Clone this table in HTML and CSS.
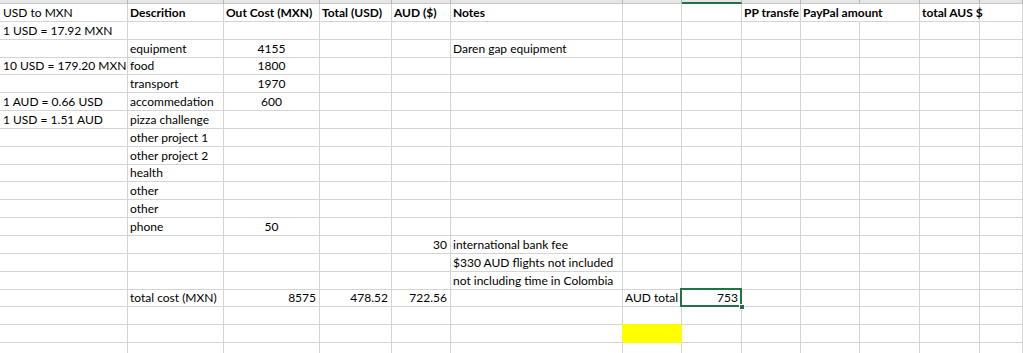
FILE: index.html
```html
<!DOCTYPE html>
<html>
<head>
<meta charset="utf-8">
<link rel="stylesheet" href="styles.css">
</head>
<body>
<div class="colhead">
  <div></div><div></div><div></div><div></div><div></div><div></div><div></div><div class="active"></div><div></div><div></div><div></div><div></div><div></div>
</div>
<div class="sheet">
  <!-- row 0 -->
  <div class="a">USD to MXN</div><div class="b">Descrition</div><div class="b">Out Cost (MXN)</div><div class="b">Total (USD)</div><div class="b">AUD ($)</div><div class="b">Notes</div><div></div><div></div><div class="b">PP transfe</div><div class="b span2">PayPal amount</div><div class="b spill">total AUS $</div><div></div>
  <!-- row 1 -->
  <div class="a">1 USD = 17.92 MXN</div><div></div><div></div><div></div><div></div><div></div><div></div><div></div><div></div><div></div><div></div><div></div><div></div>
  <!-- row 2 -->
  <div class="a"></div><div>equipment</div><div class="ctr">4155</div><div></div><div></div><div>Daren gap equipment</div><div></div><div></div><div></div><div></div><div></div><div></div><div></div>
  <!-- row 3 -->
  <div class="a">10 USD = 179.20 MXN</div><div>food</div><div class="ctr">1800</div><div></div><div></div><div></div><div></div><div></div><div></div><div></div><div></div><div></div><div></div>
  <!-- row 4 -->
  <div class="a"></div><div>transport</div><div class="ctr">1970</div><div></div><div></div><div></div><div></div><div></div><div></div><div></div><div></div><div></div><div></div>
  <!-- row 5 -->
  <div class="a">1 AUD = 0.66 USD</div><div>accommedation</div><div class="ctr">600</div><div></div><div></div><div></div><div></div><div></div><div></div><div></div><div></div><div></div><div></div>
  <!-- row 6 -->
  <div class="a">1 USD = 1.51 AUD</div><div>pizza challenge</div><div></div><div></div><div></div><div></div><div></div><div></div><div></div><div></div><div></div><div></div><div></div>
  <!-- row 7 -->
  <div class="a"></div><div>other project 1</div><div></div><div></div><div></div><div></div><div></div><div></div><div></div><div></div><div></div><div></div><div></div>
  <!-- row 8 -->
  <div class="a"></div><div>other project 2</div><div></div><div></div><div></div><div></div><div></div><div></div><div></div><div></div><div></div><div></div><div></div>
  <!-- row 9 -->
  <div class="a"></div><div>health</div><div></div><div></div><div></div><div></div><div></div><div></div><div></div><div></div><div></div><div></div><div></div>
  <!-- row 10 -->
  <div class="a"></div><div>other</div><div></div><div></div><div></div><div></div><div></div><div></div><div></div><div></div><div></div><div></div><div></div>
  <!-- row 11 -->
  <div class="a"></div><div>other</div><div></div><div></div><div></div><div></div><div></div><div></div><div></div><div></div><div></div><div></div><div></div>
  <!-- row 12 -->
  <div class="a"></div><div>phone</div><div class="ctr">50</div><div></div><div></div><div></div><div></div><div></div><div></div><div></div><div></div><div></div><div></div>
  <!-- row 13 -->
  <div class="a"></div><div></div><div></div><div></div><div class="r">30</div><div>international bank fee</div><div></div><div></div><div></div><div></div><div></div><div></div><div></div>
  <!-- row 14 -->
  <div class="a"></div><div></div><div></div><div></div><div></div><div>$330 AUD flights not included</div><div></div><div></div><div></div><div></div><div></div><div></div><div></div>
  <!-- row 15 -->
  <div class="a"></div><div></div><div></div><div></div><div></div><div>not including time in Colombia</div><div></div><div></div><div></div><div></div><div></div><div></div><div></div>
  <!-- row 16 -->
  <div class="a"></div><div>total cost (MXN)</div><div class="r">8575</div><div class="r">478.52</div><div class="r">722.56</div><div></div><div>AUD total</div><div class="r sel">753</div><div></div><div></div><div></div><div></div><div></div>
  <!-- row 17 -->
  <div class="a"></div><div></div><div></div><div></div><div></div><div></div><div></div><div></div><div></div><div></div><div></div><div></div><div></div>
  <!-- row 18 -->
  <div class="a"></div><div></div><div></div><div></div><div></div><div></div><div class="yellow"></div><div></div><div></div><div></div><div></div><div></div><div></div>
  <!-- row 19 -->
  <div class="a"></div><div></div><div></div><div></div><div></div><div></div><div></div><div></div><div></div><div></div><div></div><div></div><div></div>
</div>
</body>
</html>
```
FILE: styles.css
```css
:root {
  --cols: 128px 96px 96px 72px 59px 172px 59px 60px 59px 59px 60px 60px 1fr;
  --grid: #d4d4d4;
  --green: #217346;
}

html, body {
  margin: 0;
  padding: 0;
  background: #ffffff;
  overflow: hidden;
}

body {
  width: 1023px;
  height: 353px;
  font-family: Lato, "Liberation Sans", sans-serif;
  font-size: 12px;
  color: #000000;
}

.colhead {
  display: grid;
  grid-template-columns: var(--cols);
  height: 4px;
  background: #e6e6e6;
}

.colhead > div {
  box-sizing: border-box;
  border-right: 1px solid #b4b4b4;
  border-bottom: 1px solid #c8c8c8;
}

.colhead > .active {
  border-bottom: 2px solid var(--green);
}

.sheet {
  display: grid;
  grid-template-columns: var(--cols);
  grid-auto-rows: 17.85px;
}

.sheet > div {
  box-sizing: border-box;
  border-right: 1px solid var(--grid);
  border-bottom: 1px solid var(--grid);
  padding: 0 2px 1px 2px;
  display: flex;
  align-items: flex-end;
  justify-content: flex-start;
  white-space: nowrap;
  overflow: hidden;
  line-height: 14px;
}

.sheet > .a {
  padding-left: 3px;
}

.sheet > .b {
  font-weight: 700;
}

.sheet > .spill {
  overflow: visible;
}

.sheet > .span2 {
  grid-column: span 2;
}

.sheet > .r {
  justify-content: flex-end;
  padding-right: 3px;
}

.sheet > .ctr {
  justify-content: center;
}

.sheet > .yellow {
  background: #ffff00;
  border-color: #ffff00;
  box-shadow: -1px -1px 0 #ffff00;
}

.sheet > .sel {
  position: relative;
  overflow: visible;
}

.sel::after {
  content: "";
  position: absolute;
  left: -2px;
  top: -2px;
  right: -1px;
  bottom: -1px;
  border: 2px solid var(--green);
  pointer-events: none;
}

.sel::before {
  content: "";
  position: absolute;
  right: -4px;
  bottom: -4px;
  width: 4px;
  height: 4px;
  background: var(--green);
  border: 1px solid #ffffff;
  z-index: 2;
}
```
